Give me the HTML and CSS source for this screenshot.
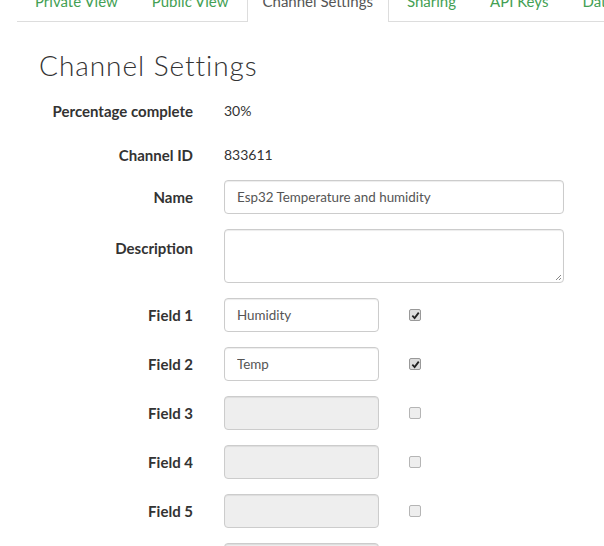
FILE: index.html
```html
<!DOCTYPE html>
<html lang="en">
<head>
  <meta charset="UTF-8" />
  <title>Channel Settings</title>
  <link rel="stylesheet" href="styles.css">
</head>
<body>

  <ul class="nav-tabs">
    <li class="tab"><a>Private View</a></li>
    <li class="tab"><a>Public View</a></li>
    <li class="tab active"><a>Channel Settings</a></li>
    <li class="tab"><a>Sharing</a></li>
    <li class="tab"><a>API Keys</a></li>
    <li class="tab"><a>Data Import / Export</a></li>
  </ul>

  <div class="content">
    <h1 class="title">Channel Settings</h1>

    <div class="form">
      <div class="row row-static">
        <label>Percentage complete</label>
        <div class="static">30%</div>
      </div>
      <div class="row row-static row-id">
        <label>Channel ID</label>
        <div class="static">833611</div>
      </div>
      <div class="row">
        <label>Name</label>
        <input class="input input-wide" type="text" value="Esp32 Temperature and humidity">
      </div>
      <div class="row">
        <label class="label-desc">Description</label>
        <div class="textarea">
          <svg class="grip" viewBox="0 0 8 8" width="8" height="8">
            <path d="M7 2L2 7M7 5L5 7" stroke="#888" stroke-width="1"/>
          </svg>
        </div>
      </div>

      <div class="row">
        <label>Field 1</label>
        <input class="input input-field" type="text" value="Humidity">
        <span class="check checked">
          <svg viewBox="0 0 10 10" width="9" height="9"><path d="M1.5 5.2L4 7.8L8.6 1.8" fill="none" stroke="#222" stroke-width="2"/></svg>
        </span>
      </div>
      <div class="row">
        <label>Field 2</label>
        <input class="input input-field" type="text" value="Temp">
        <span class="check checked">
          <svg viewBox="0 0 10 10" width="9" height="9"><path d="M1.5 5.2L4 7.8L8.6 1.8" fill="none" stroke="#222" stroke-width="2"/></svg>
        </span>
      </div>
      <div class="row">
        <label>Field 3</label>
        <input class="input input-field" type="text" disabled>
        <span class="check"></span>
      </div>
      <div class="row">
        <label>Field 4</label>
        <input class="input input-field" type="text" disabled>
        <span class="check"></span>
      </div>
      <div class="row">
        <label>Field 5</label>
        <input class="input input-field" type="text" disabled>
        <span class="check"></span>
      </div>
      <div class="row">
        <label>Field 6</label>
        <input class="input input-field" type="text" disabled>
        <span class="check"></span>
      </div>
    </div>
  </div>

</body>
</html>
```

FILE: styles.css
```css
body {
  margin: 0;
  background-color: #fff;
  color: #333;
  font-family: Lato, "Open Sans", sans-serif;
  font-size: 15px;
  overflow: hidden;
}

/* tabs */
.nav-tabs {
  display: flex;
  list-style: none;
  margin: -21px 0 0 17px;
  padding: 0 0 0 2px;
  border-bottom: 1px solid #ddd;
  white-space: nowrap;
}

.tab a {
  display: block;
  padding: 11px 15px 10px 15px;
  margin-right: 2px;
  line-height: 20px;
  font-size: 15px;
  color: #43a053;
  border: 1px solid transparent;
  border-bottom: none;
}

.tab.active a {
  color: #555;
  background-color: #fff;
  border-color: #ddd;
  margin-bottom: -1px;
  padding-bottom: 11px;
  border-radius: 4px 4px 0 0;
}

/* page */
.content {
  padding-top: 26px;
}

.title {
  margin: 0 0 12px 39px;
  font-size: 28px;
  font-weight: 300;
  color: #333;
  line-height: 34px;
  letter-spacing: 0.95px;
}

.row {
  display: flex;
  align-items: flex-start;
  margin-bottom: 15px;
}

.row label {
  flex: 0 0 193px;
  text-align: right;
  font-weight: bold;
  padding-top: 7px;
  line-height: 20px;
  color: #333;
}

.row label.label-desc {
  padding-top: 9px;
}

.row-static {
  height: 29px;
}

.row-id {
  height: 27px;
}

.static {
  margin-left: 31px;
  padding-top: 7px;
  line-height: 20px;
  font-size: 14px;
}

.input {
  margin: 0 0 0 31px;
  height: 34px;
  box-sizing: border-box;
  padding: 6px 12px;
  border: 1px solid #ccc;
  border-radius: 4px;
  font-family: Lato, "Open Sans", sans-serif;
  font-size: 13.4px;
  color: #555;
  background-color: #fff;
  box-shadow: inset 0 1px 1px rgba(0, 0, 0, 0.075);
}

.input:disabled {
  background-color: #eee;
}

.input-wide {
  width: 340px;
}

.input-field {
  width: 155px;
}

.textarea {
  position: relative;
  margin-left: 31px;
  width: 340px;
  height: 54px;
  box-sizing: border-box;
  border: 1px solid #ccc;
  border-radius: 4px;
  box-shadow: inset 0 1px 1px rgba(0, 0, 0, 0.075);
}

.grip {
  position: absolute;
  right: 1px;
  bottom: 1px;
}

.check {
  display: flex;
  align-items: center;
  justify-content: center;
  margin: 11px 0 0 30px;
  width: 12px;
  height: 12px;
  box-sizing: border-box;
  border: 1px solid #b5b5b5;
  border-radius: 2px;
  background-color: #eee;
}

.check.checked {
  background-color: #ddd;
  border-color: #999;
}
```
